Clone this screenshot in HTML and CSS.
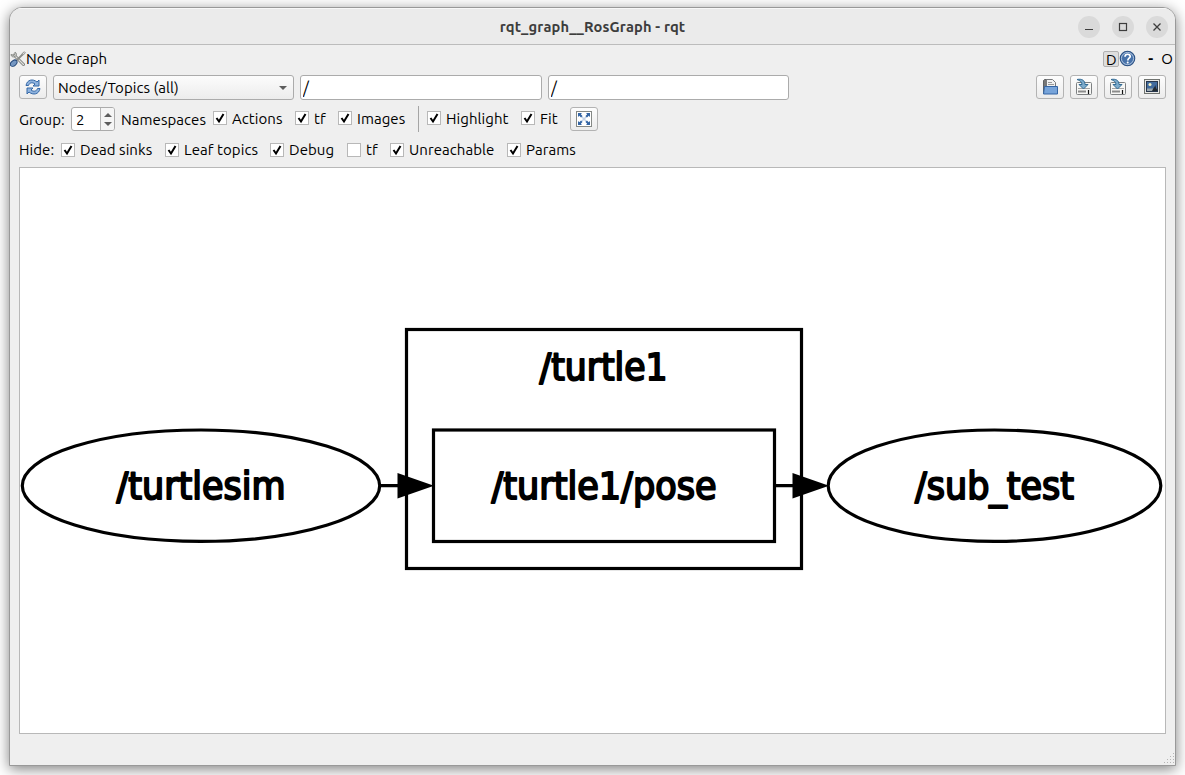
FILE: index.html
```
<!DOCTYPE html>
<html lang="en">

<head>
  <meta charset="utf-8">
  <title>rqt_graph__RosGraph - rqt</title>
  <link rel="stylesheet" href="styles.css">
</head>

<body>
  <svg class="defs" width="0" height="0">
    <symbol id="save" viewBox="0 0 18 18">
      <rect x="1.500" y="4.500" width="15" height="12" rx="1" fill="#f7f7f5" stroke="#7d8082"/>
      <path d="M3 13.500h8" stroke="#8b8b8b" stroke-width="2"/>
      <path d="M3 10.500h12" stroke="#a5a5a5"/>
      <path d="M13.500 12v4" stroke="#111" stroke-width="1.200"/>
      <path d="M2 1.500c5-1 8 1 8 5h3L8.500 11 4 6.500h3C7 4 5 2.500 2 1.500z" fill="#7dabcb" stroke="#336b94"/>
    </symbol>
  </svg>

  <div class="window">
    <div class="titlebar">
      <span class="title">rqt_graph__RosGraph - rqt</span>
      <div class="controls">
        <span class="control"><svg width="10" height="10"><path d="M1 7.500h8" stroke="#3d3d3d"/></svg></span>
        <span class="control"><svg width="10" height="10"><rect x="1.500" y="1.500" width="7" height="7" fill="none" stroke="#3d3d3d" stroke-width="1.200"/></svg></span>
        <span class="control"><svg width="10" height="10"><path d="M1.500 1.500l7 7m0-7l-7 7" stroke="#3d3d3d" stroke-width="1.300"/></svg></span>
      </div>
    </div>

    <div class="dock">
      <svg width="16" height="16" viewBox="0 0 16 16">
        <path d="M4 4l9.500 9.500" stroke="#7d7f7b" stroke-width="3" stroke-linecap="round"/>
        <path d="M4 4l9.500 9.500" stroke="#dedfdc" stroke-width="1.200" stroke-linecap="round"/>
        <path d="M1 3.500c0 2 2 3 4 2s2-3 0-4.500v2.500L3.500 4.500z" fill="#dedfdc" stroke="#858783"/>
        <path d="M7 9l5.500-5.500" stroke="#898b87" stroke-width="1.800"/>
        <path d="M12 4l.500-2L14.500.800l.800.800L14 3.500z" fill="#ddd" stroke="#858783" stroke-width=".8"/>
        <ellipse cx="3.700" cy="12.200" rx="3.800" ry="2.500" transform="rotate(-42 3.700 12.200)" fill="#7597c2" stroke="#244879"/>
      </svg>
      <span class="dock-title">Node Graph</span>
      <div class="dock-buttons">
        <span class="dock-d">D</span>
        <svg class="help" width="17" height="17" viewBox="0 0 17 17">
          <circle cx="8.500" cy="8.500" r="7.200" fill="#4772aa" stroke="#2c5284" stroke-width="1.200"/>
          <circle cx="8.500" cy="8.500" r="6.100" fill="none" stroke="#b9cce4" stroke-width=".9"/>
          <path d="M6 6.700c0-3.200 5.200-3.200 5.200-.3 0 1.800-2.400 1.800-2.400 4" fill="none" stroke="#fff" stroke-width="1.700"/>
          <circle cx="8.700" cy="12.400" r="1" fill="#fff"/>
        </svg>
        <span class="dock-min">-</span>
        <span class="dock-o">O</span>
      </div>
    </div>

    <div class="row row-filter">
      <button class="tool">
        <svg width="18" height="18" viewBox="0 0 18 18">
          <path d="M2 7.500C3 1.500 9 .500 13 4l2-2v6H9l2-2C8.500 4 5.500 4.500 4.500 7.500z" fill="#8fb3de" stroke="#3568a6"/>
          <path d="M16 10.500c-1 6-7 7-11 3.500l-2 2v-6h6l-2 2c2.500 2 5.500 1.500 6.500-1.500z" fill="#8fb3de" stroke="#3568a6"/>
        </svg>
      </button>
      <div class="combo">
        <span>Nodes/Topics (all)</span>
        <span class="arrow down"></span>
      </div>
      <input class="field" type="text" value="/">
      <input class="field" type="text" value="/">
      <div class="files">
        <button class="tool">
          <svg width="18" height="18" viewBox="0 0 18 18">
            <path d="M2.500 16V2.500l1-1h4l1 2" fill="#777" stroke="#5f6163"/>
            <path d="M5.500 11V1.500h6l3 3V11z" fill="#f1f1f1" stroke="#77797b"/>
            <path d="M7 4.500h4M7 6.500h6" stroke="#999"/>
            <path d="M3.500 8.500h13v7.500h-14z" fill="#77a4da" stroke="#3465a4"/>
          </svg>
        </button>
        <button class="tool"><svg width="18" height="18"><use href="#save"/></svg></button>
        <button class="tool"><svg width="18" height="18"><use href="#save"/></svg></button>
        <button class="tool">
          <svg width="18" height="18" viewBox="0 0 18 18">
            <rect x="1.500" y="1.500" width="15" height="14" fill="#e8e8e5" stroke="#70736f"/>
            <rect x="3.500" y="3.500" width="11" height="10" fill="#416b9e" stroke="#27364c"/>
            <path d="M4 10.500h10V13H4z" fill="#9ca8ae"/>
            <path d="M9 13l1.500-3 1-1 .800-2 .700 3 1 1v2z" fill="#222b33"/>
            <circle cx="7" cy="6.500" r="1.500" fill="#f5f3c6"/>
          </svg>
        </button>
      </div>
    </div>

    <div class="row row-group">
      <span>Group:</span>
      <div class="spin">
        <span class="spin-value">2</span>
        <span class="spin-arrows"><i class="arrow up"></i><i class="arrow down"></i></span>
      </div>
      <span>Namespaces</span>
      <label class="check"><input type="checkbox" checked>Actions</label>
      <label class="check"><input type="checkbox" checked>tf</label>
      <label class="check"><input type="checkbox" checked>Images</label>
      <span class="divider"></span>
      <label class="check"><input type="checkbox" checked>Highlight</label>
      <label class="check"><input type="checkbox" checked>Fit</label>
      <button class="tool">
        <svg width="18" height="18" viewBox="0 0 18 18">
          <rect x="1.500" y="1.500" width="15" height="15" fill="#fff" stroke="#858885"/>
          <path d="M5 5l8 8m0-8l-8 8" stroke="#c3d2e6" stroke-width="1.500"/>
          <path d="M3 3h4L5.800 4.300 7.500 6 6 7.500 4.300 5.800 3 7zM15 3v4l-1.300-1.200L12 7.500 10.500 6l1.700-1.700L11 3zM3 15v-4l1.300 1.200L6 10.500 7.500 12l-1.700 1.700L7 15zM15 15h-4l1.200-1.300-1.700-1.700 1.500-1.500 1.700 1.700L15 11z" fill="#3465a4"/>
        </svg>
      </button>
    </div>

    <div class="row row-hide">
      <span>Hide:</span>
      <label class="check"><input type="checkbox" checked>Dead sinks</label>
      <label class="check"><input type="checkbox" checked>Leaf topics</label>
      <label class="check"><input type="checkbox" checked>Debug</label>
      <label class="check"><input type="checkbox">tf</label>
      <label class="check"><input type="checkbox" checked>Unreachable</label>
      <label class="check"><input type="checkbox" checked>Params</label>
    </div>

    <div class="graph">
      <svg width="1145" height="565" viewBox="20 168 1145 565">
        <g class="shape">
          <rect x="406.500" y="329.500" width="395" height="239"/>
          <rect x="433.500" y="430" width="341" height="111.500"/>
          <ellipse cx="201" cy="485.700" rx="178.700" ry="55.700"/>
          <ellipse cx="994.500" cy="485.700" rx="166.300" ry="55.700"/>
          <path d="M380 485.700h20M775 485.700h20"/>
        </g>
        <path class="head" d="M397.500 473l36.500 12.700-36.500 12.700zM792.500 473l36.500 12.700-36.500 12.700z"/>
        <g class="names">
          <text x="539.500" y="379.500" textLength="128" lengthAdjust="spacingAndGlyphs">/turtle1</text>
          <text x="116.500" y="499" textLength="169" lengthAdjust="spacingAndGlyphs">/turtlesim</text>
          <text x="491.500" y="499" textLength="225" lengthAdjust="spacingAndGlyphs">/turtle1/pose</text>
          <text x="915" y="499" textLength="159" lengthAdjust="spacingAndGlyphs">/sub_test</text>
        </g>
      </svg>
    </div>

    <div class="status">
      <svg width="12" height="12" fill="#b5b5b5">
        <path d="M10 0h1v1h-1zM7 3h1v1H7zM10 3h1v1h-1zM4 6h1v1H4zM7 6h1v1H7zM10 6h1v1h-1zM1 9h1v1H1zM4 9h1v1H4zM7 9h1v1H7zM10 9h1v1h-1z"/>
      </svg>
    </div>
  </div>
</body>

</html>
```
FILE: styles.css
```
body {
  margin: 0;
  height: 775px;
  padding: 7px 9px 9px;
  box-sizing: border-box;
  overflow: hidden;
  background: #fff;
  font-family: Ubuntu, "Noto Sans", sans-serif;
  font-size: 15px;
  letter-spacing: 0.06px;
  color: #000;
}

.defs {
  position: absolute;
}

.window {
  height: 759px;
  box-sizing: border-box;
  border: 1px solid #999;
  border-radius: 13px 13px 0 0;
  background: #efefef;
  box-shadow: 0 3px 14px rgba(0, 0, 0, 0.5);
  display: flex;
  flex-direction: column;
  overflow: hidden;
}

.titlebar {
  height: 37px;
  box-sizing: border-box;
  border-top: 1px solid #f8f8f8;
  border-bottom: 1px solid #bcbcbc;
  background: #ebebeb;
  display: grid;
  grid-template-columns: 1fr auto 1fr;
  align-items: center;
  flex: none;
}

.title {
  grid-column: 2;
  font-size: 14.67px;
  font-weight: bold;
  letter-spacing: 0.15px;
  color: #3d3d3d;
}

.controls {
  display: flex;
  justify-content: flex-end;
  gap: 12px;
  padding-right: 7px;
}

.control {
  width: 22px;
  height: 22px;
  border-radius: 50%;
  background: #dadada;
  display: flex;
  align-items: center;
  justify-content: center;
}

.dock {
  height: 28px;
  display: flex;
  align-items: center;
  flex: none;
}

.dock-title {
  margin-bottom: 2px;
}

.dock-buttons {
  margin-left: auto;
  margin-bottom: 1px;
  padding-right: 2px;
  display: flex;
  align-items: center;
}

.dock-d {
  width: 14px;
  height: 14px;
  line-height: 15px;
  border: 1px solid #b1b1b1;
  border-radius: 2px;
  background: #dedede;
  text-align: center;
}

.dock-min {
  margin-left: 12px;
  width: 6px;
  font-weight: bold;
}

.dock-o {
  margin-left: 7px;
}

.row {
  padding: 0 9px;
  display: grid;
  align-items: center;
  flex: none;
  white-space: nowrap;
}

.row-filter {
  height: 29px;
  grid-template-columns: 28px 241px 242px 241px 1fr;
  column-gap: 6px;
}

.row-filter .tool {
  margin-bottom: 1px;
}

.files {
  display: flex;
  justify-content: flex-end;
  gap: 6px;
}

.row-group {
  height: 34px;
  grid-template-columns: 52px 50px 92px 82px 43px 80px 9px 94px 49px 28px;
}

.row-group .check {
  margin-bottom: 1px;
}

.row-hide {
  height: 28px;
  line-height: 18px;
  padding-bottom: 1px;
  box-sizing: border-box;
  grid-template-columns: 42px 104px 105px 77px 43px 117px 80px;
}

.row-hide .check input {
  margin: 0;
}

.tool {
  width: 28px;
  height: 24px;
  padding: 0;
  border: 1px solid #b3b3b3;
  border-radius: 3px;
  background: linear-gradient(#fdfdfd, #ececec);
  display: flex;
  align-items: center;
  justify-content: center;
}

.combo {
  height: 25px;
  box-sizing: border-box;
  padding: 0 6px 0 4px;
  border: 1px solid #ababab;
  border-radius: 3px;
  background: linear-gradient(#fcfcfc, #ececec);
  display: flex;
  align-items: center;
  justify-content: space-between;
}

.field {
  width: 100%;
  height: 25px;
  box-sizing: border-box;
  padding: 0 2px;
  border: 1px solid #ababab;
  border-radius: 3px;
  background: #fff;
  font: inherit;
  font-size: 16px;
}

.arrow {
  border: 4px solid transparent;
}

.arrow.down {
  border-top-color: #5d5d5d;
  border-bottom: 0;
}

.arrow.up {
  border-bottom-color: #5d5d5d;
  border-top: 0;
}

.spin {
  width: 44px;
  height: 24px;
  box-sizing: border-box;
  border: 1px solid #ababab;
  border-radius: 3px;
  background: #fff;
  display: flex;
  overflow: hidden;
}

.spin-value {
  flex: 1;
  padding-left: 4px;
  line-height: 24px;
}

.spin-arrows {
  width: 13px;
  border-left: 1px solid #b5b5b5;
  background: #f5f5f5;
  display: flex;
  flex-direction: column;
  align-items: center;
  justify-content: center;
  gap: 5px;
}

.check {
  display: flex;
  align-items: center;
  gap: 5px;
}

.check input {
  appearance: none;
  width: 14px;
  height: 14px;
  margin: 0 0 1px;
  border: 1px solid #b8b8b8;
  background: #fff;
}

.check input:checked {
  background: #fff url("data:image/svg+xml,%3Csvg xmlns='http://www.w3.org/2000/svg' viewBox='0 0 12 12'%3E%3Cpath d='M2.500 6l2.500 3.500L9.500 2' fill='none' stroke='%23000' stroke-width='2'/%3E%3C/svg%3E");
}

.divider {
  width: 1px;
  height: 26px;
  background: #a5a5a5;
}

.graph {
  margin: 3px 9px 0;
  height: 565px;
  border: 1px solid #b8b8b8;
  background: #fff;
  flex: none;
}

.graph svg {
  display: block;
}

.shape {
  fill: none;
  stroke: #000;
  stroke-width: 3.2;
}

.names {
  font-family: "DejaVu Sans", sans-serif;
  font-size: 37px;
  letter-spacing: 0;
  stroke: #000;
  stroke-width: 2;
  stroke-linejoin: round;
}

.status {
  flex: 1;
  display: flex;
  align-items: flex-end;
  justify-content: flex-end;
}
```
